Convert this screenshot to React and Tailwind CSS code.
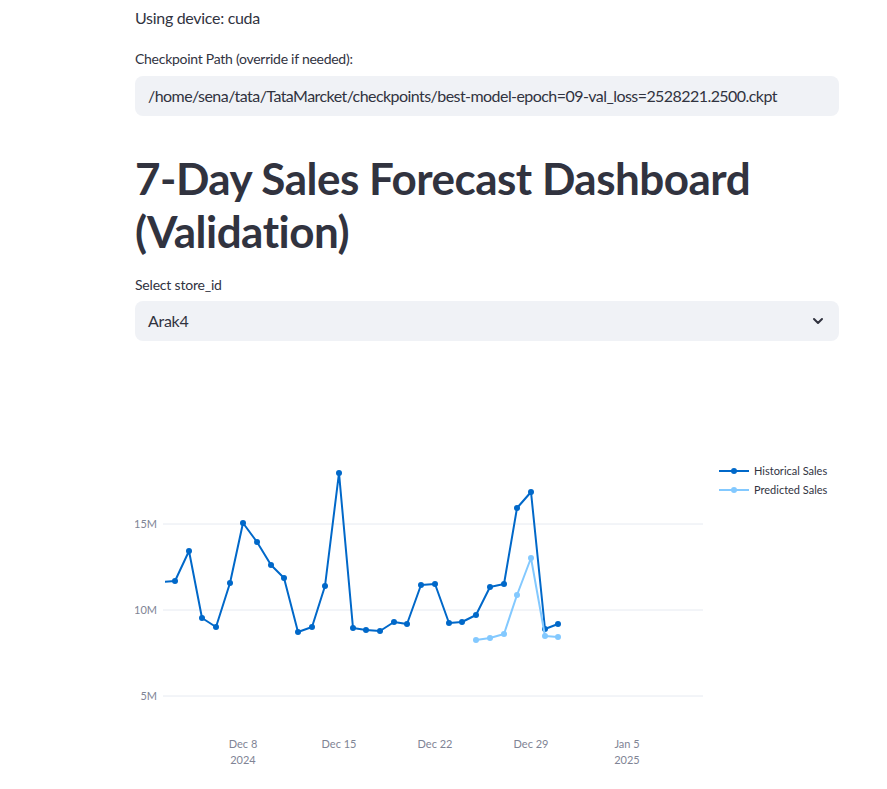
import { ChevronDown } from "lucide-react";

const hist = [
  [161, 582], [175, 581], [189, 551], [202, 618], [216, 627], [230, 583],
  [243, 523], [257, 542], [271, 565], [284, 578], [298, 632], [312, 627],
  [325, 586], [339, 473], [353, 628], [366, 630], [380, 631], [394, 622],
  [407, 624], [421, 585], [435, 584], [449, 623], [462, 622], [476, 615],
  [490, 587], [504, 584], [517, 508], [531, 492], [545, 629], [558, 624],
];

const pred = [
  [476, 640], [490, 638], [504, 634], [517, 595], [531, 558], [545, 636], [558, 637],
];

const yTicks = [
  { y: 524, label: "15M" },
  { y: 610, label: "10M" },
  { y: 696, label: "5M" },
];

const xTicks = [
  { x: 243, label: "Dec 8", year: "2024" },
  { x: 339, label: "Dec 15" },
  { x: 435, label: "Dec 22" },
  { x: 531, label: "Dec 29" },
  { x: 627, label: "Jan 5", year: "2025" },
];

const toPath = (pts) => pts.map(([x, y], i) => `${i ? "L" : "M"}${x},${y}`).join(" ");

// chart is drawn in page coordinates, shifted by the svg's own origin
const OX = 135;
const OY = 341;

const SalesChart = () => (
  <svg width="704" height="448" viewBox={`${OX} ${OY} 704 448`} className="block">
    <defs>
      <clipPath id="plot">
        <rect x="165" y="440" width="538" height="290" />
      </clipPath>
    </defs>

    {yTicks.map((t) => (
      <g key={t.label}>
        <line x1="163" x2="703" y1={t.y} y2={t.y} stroke="#e6eaf1" strokeWidth="1" />
        <text x="157" y={t.y + 4} textAnchor="end" fontSize="11" fill="#808495">
          {t.label}
        </text>
      </g>
    ))}

    {xTicks.map((t) => (
      <g key={t.label} fontSize="11" fill="#808495" textAnchor="middle">
        <text x={t.x} y="748">{t.label}</text>
        {t.year && <text x={t.x} y="764">{t.year}</text>}
      </g>
    ))}

    <g clipPath="url(#plot)">
      <path d={toPath(hist)} fill="none" stroke="#0068c9" strokeWidth="2" strokeLinejoin="round" />
      {hist.map(([x, y]) => (
        <circle key={`h${x}`} cx={x} cy={y} r="3" fill="#0068c9" />
      ))}
      <path d={toPath(pred)} fill="none" stroke="#83c9ff" strokeWidth="2" strokeLinejoin="round" />
      {pred.map(([x, y]) => (
        <circle key={`p${x}`} cx={x} cy={y} r="3" fill="#83c9ff" />
      ))}
    </g>

    {/* Legend */}
    <g fontSize="11" fill="#31333f">
      <line x1="719" x2="749" y1="471" y2="471" stroke="#0068c9" strokeWidth="2" />
      <circle cx="734" cy="471" r="3" fill="#0068c9" />
      <text x="754" y="475">Historical Sales</text>
      <line x1="719" x2="749" y1="490" y2="490" stroke="#83c9ff" strokeWidth="2" />
      <circle cx="734" cy="490" r="3" fill="#83c9ff" />
      <text x="754" y="494">Predicted Sales</text>
    </g>
  </svg>
);

export default function App() {
  return (
    <div className="min-h-[789px] bg-white text-[#31333f] font-['Lato','Noto_Sans',sans-serif] overflow-hidden">
      <div className="ml-[135px] w-[704px] pt-[6px]">
        <p className="text-base leading-6 tracking-[-0.3px]">Using device: cuda</p>

        <label className="block mt-[19px] text-sm leading-5 tracking-[-0.27px]">
          Checkpoint Path (override if needed):
        </label>
        <div className="mt-[7px] h-10 rounded-lg bg-[#f0f2f6] px-[13px] flex items-center text-base tracking-[-0.56px]">
          /home/sena/tata/TataMarcket/checkpoints/best-model-epoch=09-val_loss=2528221.2500.ckpt
        </div>

        <h1 className="mt-[36px] text-[44px] leading-[53px] font-bold tracking-[-0.5px]">
          7-Day Sales Forecast Dashboard (Validation)
        </h1>

        <label className="block mt-[17px] text-sm leading-5 tracking-[-0.2px]">Select store_id</label>
        <div className="mt-[6px] h-10 rounded-lg bg-[#f0f2f6] px-[13px] flex items-center justify-between text-base tracking-[-0.3px]">
          <span>Arak4</span>
          <ChevronDown size={16} strokeWidth={3} className="text-[#31333f]" />
        </div>

        <SalesChart />
      </div>
    </div>
  );
}
